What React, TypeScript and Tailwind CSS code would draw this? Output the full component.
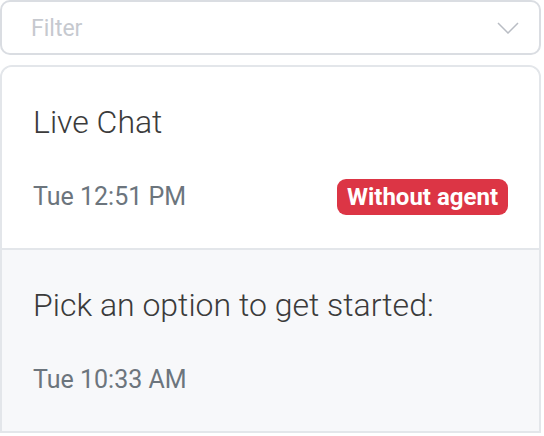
export default function App() {
  const chats = [
    { title: 'Live Chat', time: 'Tue 12:51 PM', badge: 'Without agent', active: false },
    { title: 'Pick an option to get started:', time: 'Tue 10:33 AM', badge: '', active: true },
  ]

  return (
    <div className="w-[544px] h-[436px] bg-white font-['Roboto',sans-serif]">
      <div className="w-[541px] h-[55px] border-2 border-[#dadde2] rounded-[10px] flex items-center justify-between pl-[29px] pr-[20px]">
        <span className="text-[23px] text-[#c6c9cf] pt-[4px]">Filter</span>
        <svg width="22" height="12" viewBox="0 0 22 12" fill="none" stroke="#b9bdc4" strokeWidth="1.5">
          <polyline points="1,1 11,11 21,1" />
        </svg>
      </div>
      <div className="mt-[10px] w-[541px] border-2 border-[#e3e6ea] rounded-t-[12px] overflow-hidden">
        {chats.map((c, i) => (
          <div key={i} className={`pt-[36px] pb-[33px] pl-[31px] pr-[31px] ${c.active ? 'bg-[#f7f8fa]' : 'bg-white'} ${i > 0 ? 'border-t-2 border-[#e3e6ea]' : ''}`}>
            <div className="text-[32px] leading-[38px] font-light text-[#3b3b3b]">{c.title}</div>
            <div className="mt-[38px] h-[36px] flex items-center justify-between">
              <span className="text-[25px] text-[#6c757d]">{c.time}</span>
              {c.badge && (
                <span className="bg-[#dc3545] text-white font-bold text-[24px] h-[36px] leading-[36px] px-[10px] rounded-[9px]">{c.badge}</span>
              )}
            </div>
          </div>
        ))}
      </div>
    </div>
  )
}
